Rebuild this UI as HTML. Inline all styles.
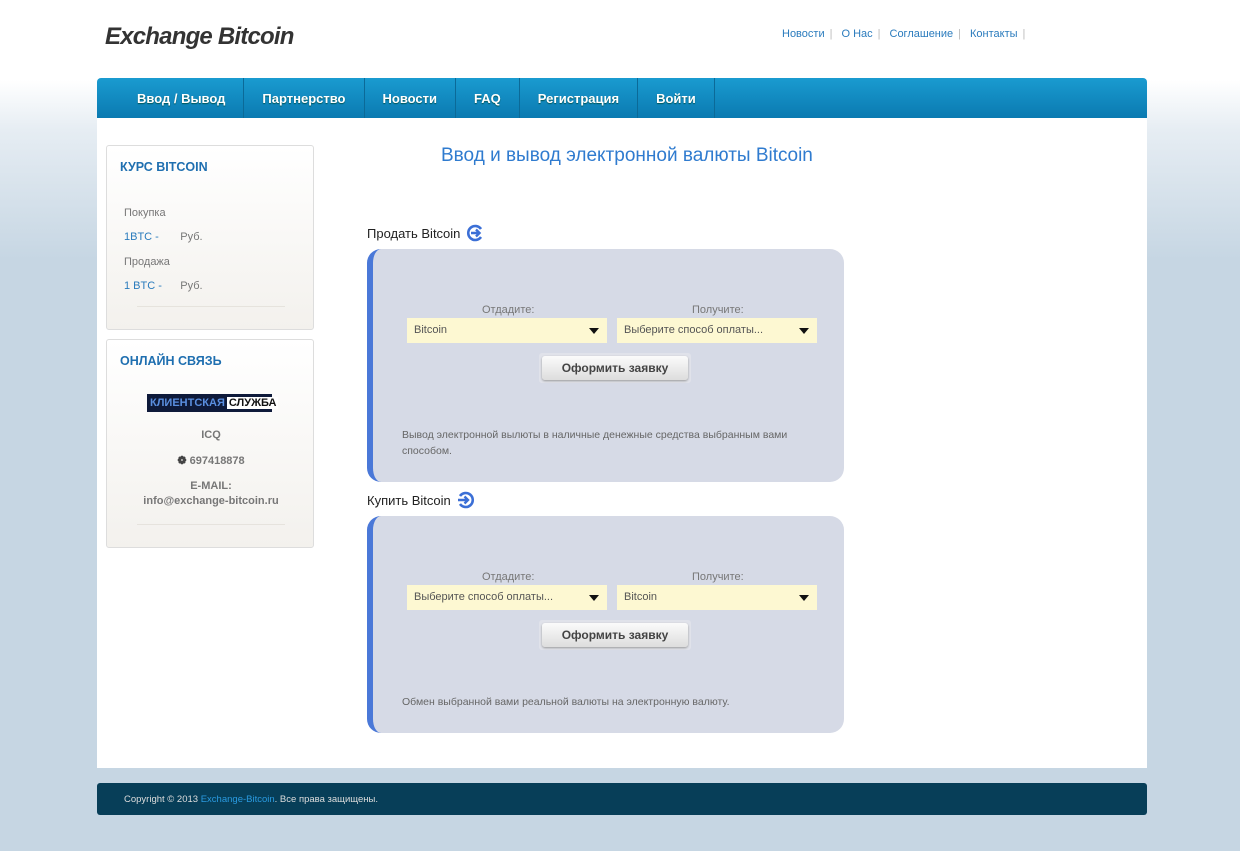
<!DOCTYPE html>
<html><head><meta charset="utf-8"><style>
*{margin:0;padding:0;box-sizing:border-box}
body{width:1240px;height:851px;background:linear-gradient(#fff 0,#fff 80px,#e6edf3 130px,#c6d6e3 260px,#c6d6e3 100%);font-family:"Liberation Sans",sans-serif;position:relative;overflow:hidden}
.abs{position:absolute}
.logo{left:105px;top:23px;font:italic bold 24px "Liberation Sans",sans-serif;color:#333;letter-spacing:-0.8px}
.top{left:782px;top:28px;font-size:11px;color:#2a7bbd}
.top span{color:#bbb;margin:0 9px 0 5px}
.nav{left:97px;top:78px;width:1050px;height:41px;background:linear-gradient(#1a9bd0,#0a79b0);border-radius:4px 4px 0 0;display:flex;padding-left:22px}
.nav div{color:#fff;font-size:13px;font-weight:bold;line-height:41px;padding:0 18px;border-right:1px solid #0b6a98;text-shadow:0 1px 1px #055}
.main{left:97px;top:118px;width:1050px;height:650px;background:#fff}
.box{left:106px;width:208px;border:1px solid #ddd;border-radius:3px;background:linear-gradient(#fff,#f3f1ed)}
.box h3{color:#1f6fb0;font-size:12.5px;margin:14px 0 0 13px}
.sm{font-size:11px;color:#777}
.bl{color:#2a7bbd}
.ttl{left:441px;top:145px;font-size:19px;color:#2f7bcf}
.sec{left:367px;font-size:13px;color:#222}
.ico{display:inline-block;width:18px;height:18px;vertical-align:-4px;margin-left:6px}
.panel{left:367px;width:477px;background:#d6dae6;border-left:6px solid #4a78d8;border-radius:14px}
.lbl{font-size:11px;color:#777;position:absolute}
.sel{position:absolute;width:200px;height:25px;background:#fdf8d2;font-size:11px;color:#555;line-height:25px;padding-left:7px}
.sel:after{content:"";position:absolute;right:8px;top:10px;border:5px solid transparent;border-top:6px solid #111;border-bottom:0}
.btn{position:absolute;left:166px;width:152px;height:30px;background:#e0e2ea;border-radius:3px;padding:3px}
.btn div{height:24px;background:linear-gradient(#fbfbfb,#ddd);border-radius:3px;font-size:12px;font-weight:bold;color:#444;text-align:center;line-height:24px;box-shadow:0 1px 2px #999}
.desc{position:absolute;left:29px;font-size:10.5px;color:#666;line-height:16px;width:410px}
.foot{left:97px;top:783px;width:1050px;height:32px;background:#073e58;border-radius:3px;font-size:9.5px;color:#ddd;line-height:33px;padding-left:27px}
</style></head><body>
<div class="abs logo">Exchange Bitcoin</div>
<div class="abs top">Новости<span>|</span>О Нас<span>|</span>Соглашение<span>|</span>Контакты<span>|</span></div>
<div class="abs nav"><div>Ввод / Вывод</div><div>Партнерство</div><div>Новости</div><div>FAQ</div><div>Регистрация</div><div>Войти</div></div>
<div class="abs main"></div>
<div class="abs box" style="top:145px;height:185px">
<h3>КУРС BITCOIN</h3>
<div class="abs sm" style="left:17px;top:61px">Покупка</div>
<div class="abs sm" style="left:17px;top:85px"><span class="bl">1BTC -</span>&nbsp;&nbsp;&nbsp;&nbsp;&nbsp;&nbsp;&nbsp;Руб.</div>
<div class="abs sm" style="left:17px;top:110px">Продажа</div>
<div class="abs sm" style="left:17px;top:134px"><span class="bl">1 BTC -</span>&nbsp;&nbsp;&nbsp;&nbsp;&nbsp;&nbsp;Руб.</div>
<div class="abs" style="left:30px;top:160px;width:148px;height:1px;background:#e6e3dd"></div>
</div>
<div class="abs box" style="top:339px;height:209px">
<h3>ОНЛАЙН СВЯЗЬ</h3>
<div class="abs" style="left:40px;top:54px;width:125px;height:18px;background:#0e1a3a;font-size:11px;font-weight:bold;line-height:18px;padding-left:3px;color:#5a8fe0">КЛИЕНТСКАЯ<span style="background:#fff;color:#111;padding:0 2px;margin-left:2px">СЛУЖБА</span></div>
<div class="abs sm" style="left:0;width:208px;text-align:center;top:89px;font-weight:bold">ICQ</div>
<div class="abs sm" style="left:0;width:208px;text-align:center;top:114px;font-weight:bold"><span style="color:#444">❁</span> 697418878</div>
<div class="abs sm" style="left:0;width:208px;text-align:center;top:139px;font-weight:bold;line-height:15px">E-MAIL:<br>info@exchange-bitcoin.ru</div>
<div class="abs" style="left:30px;top:184px;width:148px;height:1px;background:#e6e3dd"></div>
</div>
<div class="abs ttl">Ввод и вывод электронной валюты Bitcoin</div>
<div class="abs sec" style="top:224px">Продать Bitcoin<svg class="ico" viewBox="0 0 18 18"><path d="M15 5A7 7 0 1 0 15 13" fill="none" stroke="#3b6fd6" stroke-width="2.6"/><path d="M5 9h8M10 5.5l3.5 3.5-3.5 3.5" fill="none" stroke="#3b6fd6" stroke-width="2.4"/></svg></div>
<div class="abs panel" style="top:249px;height:233px">
<div class="lbl" style="left:109px;top:55px">Отдадите:</div>
<div class="lbl" style="left:319px;top:55px">Получите:</div>
<div class="sel" style="left:34px;top:69px">Bitcoin</div>
<div class="sel" style="left:244px;top:69px">Выберите способ оплаты...</div>
<div class="btn" style="top:104px"><div>Оформить заявку</div></div>
<div class="desc" style="top:178px">Вывод электронной вылюты в наличные денежные средства выбранным вами способом.</div>
</div>
<div class="abs sec" style="top:491px">Купить Bitcoin<svg class="ico" viewBox="0 0 18 18"><path d="M3 5A7 7 0 1 1 3 13" fill="none" stroke="#3b6fd6" stroke-width="2.6"/><path d="M1 9h10M7.5 5.5L11 9l-3.5 3.5" fill="none" stroke="#3b6fd6" stroke-width="2.4"/></svg></div>
<div class="abs panel" style="top:516px;height:217px">
<div class="lbl" style="left:109px;top:55px">Отдадите:</div>
<div class="lbl" style="left:319px;top:55px">Получите:</div>
<div class="sel" style="left:34px;top:69px">Выберите способ оплаты...</div>
<div class="sel" style="left:244px;top:69px">Bitcoin</div>
<div class="btn" style="top:104px"><div>Оформить заявку</div></div>
<div class="desc" style="top:178px">Обмен выбранной вами реальной валюты на электронную валюту.</div>
</div>
<div class="abs foot">Copyright © 2013 <span style="color:#2a9ae0">Exchange-Bitcoin</span>. Все права защищены.</div>
</body></html>
